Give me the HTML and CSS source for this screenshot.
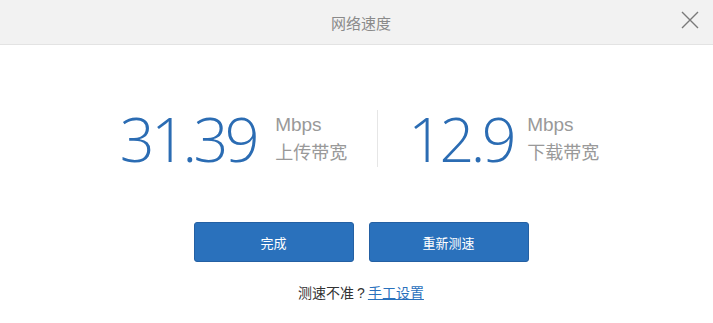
FILE: index.html
```html
<!DOCTYPE html>
<html>
<head>
<meta charset="utf-8">
<link rel="stylesheet" href="styles.css">
</head>
<body>
<div class="dialog">
  <div class="header">
    <span class="title">网络速度</span>
    <span class="close">
      <svg width="18" height="18" viewBox="0 0 18 18"><path d="M1 1L17 17M17 1L1 17" stroke="#7a7a7a" stroke-width="1.4" fill="none"/></svg>
    </span>
  </div>
  <div class="stats">
    <div class="stat up">
      <span class="num">31.39</span>
      <div class="meta"><span class="unit">Mbps</span><span class="label">上传带宽</span></div>
    </div>
    <div class="divider"></div>
    <div class="stat down">
      <span class="num">12.9</span>
      <div class="meta"><span class="unit">Mbps</span><span class="label">下载带宽</span></div>
    </div>
  </div>
  <div class="buttons">
    <button class="btn">完成</button>
    <button class="btn">重新测速</button>
  </div>
  <div class="hint">测速不准<span class="q">?</span><a class="link">手工设置</a></div>
</div>
</body>
</html>
```
FILE: styles.css
```css
* { box-sizing: border-box; }
html, body { margin: 0; padding: 0; background: #fff; }
body { width: 713px; height: 323px; overflow: hidden; font-family: "Noto Sans CJK SC", "Liberation Sans", sans-serif; }
.dialog { width: 713px; height: 323px; display: flex; flex-direction: column; }
.header { position: relative; height: 45px; background: #f2f2f2; border-bottom: 1px solid #e3e3e3; display: flex; align-items: center; justify-content: center; padding-left: 9px; }
.title { font-size: 15px; color: #8a8a8a; }
.close { position: absolute; right: 14px; top: 11px; width: 18px; height: 18px; }
.close svg { display: block; }
.stats { display: flex; justify-content: center; align-items: center; margin-top: 65px; height: 57px; padding-left: 6px; }
.stat { display: flex; align-items: center; }
.stat.up { margin-right: 30px; }
.stat.down { margin-left: 30px; }
.num { font-family: "Open Sans", sans-serif; font-weight: 350; font-size: 61px; color: #2b6cb3; letter-spacing: -3.5px; line-height: 1; }
.up .num { margin-right: 19px; }
.down .num { margin-right: 14px; }
.meta { display: flex; flex-direction: column; color: #999; }
.unit { font-family: "Liberation Sans", sans-serif; font-size: 19px; line-height: 24px; }
.label { font-size: 18px; line-height: 28px; }
.divider { width: 1px; height: 57px; background: #e6e6e6; }
.buttons { display: flex; justify-content: center; gap: 15px; margin-top: 55px; padding-left: 9px; }
.btn { width: 160px; height: 40px; background: #2a71bc; border: 1px solid #2460a3; border-radius: 3px; color: #fff; font-family: "Noto Sans CJK SC", sans-serif; font-size: 13px; padding: 0; }
.hint { text-align: center; margin-top: 20px; font-size: 14px; color: #333; padding-left: 9px; }
.q { font-family: "Liberation Sans", sans-serif; padding: 0 3px; }
.link { color: #2a71bc; text-decoration: underline; }
```
